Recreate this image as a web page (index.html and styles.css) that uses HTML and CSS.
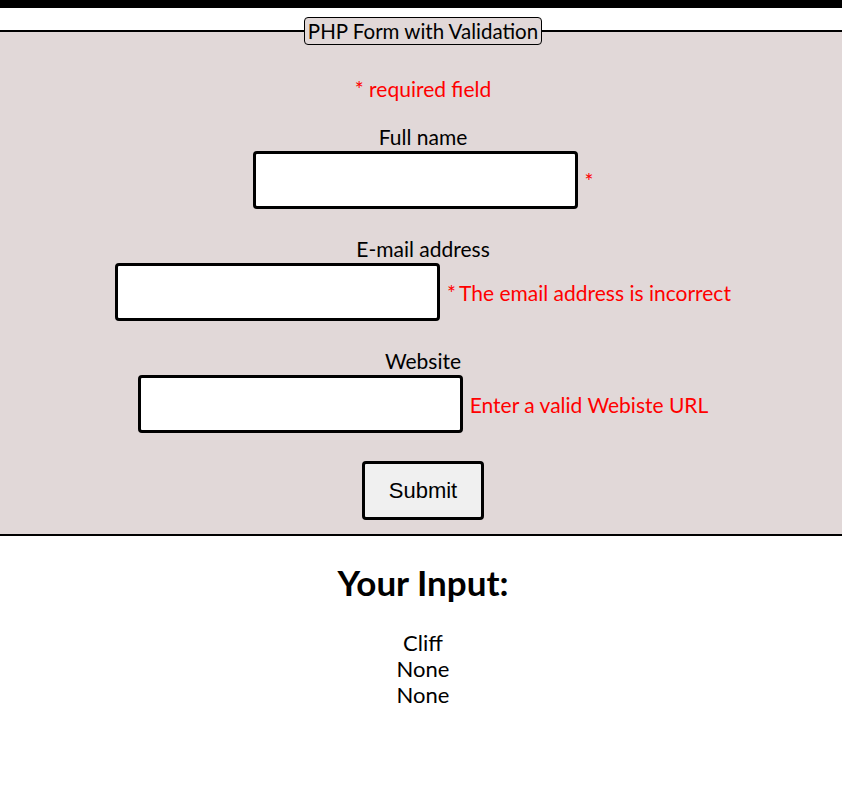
FILE: index.html
```html
<!DOCTYPE html>
<html>
<head>
<meta charset="utf-8">
<link rel="stylesheet" href="styles.css">
</head>
<body>
<div class="topbar"></div>
<form class="form">
  <fieldset class="box">
    <legend class="legend">PHP Form with Validation</legend>
    <p class="required">* required field</p>
    <div class="field">
      <label class="label">Full name</label>
      <div class="line"><input class="input" type="text"> <span class="err">*</span></div>
    </div>
    <div class="field">
      <label class="label">E-mail address</label>
      <div class="line"><input class="input" type="text"> <span class="err"><span class="star">*</span>The email address is incorrect</span></div>
    </div>
    <div class="field">
      <label class="label">Website</label>
      <div class="line"><input class="input" type="text"> <span class="err">Enter a valid Webiste URL</span></div>
    </div>
    <div class="actions"><button class="submit" type="button">Submit</button></div>
  </fieldset>
</form>
<section class="output">
  <h2 class="out-title">Your Input:</h2>
  <div class="out-lines">
    <div>Cliff</div>
    <div>None</div>
    <div>None</div>
  </div>
</section>
</body>
</html>
```
FILE: styles.css
```css
html, body {
  margin: 0;
  padding: 0;
  background: #ffffff;
}
body {
  font-family: "Lato", "Open Sans", sans-serif;
  font-size: 21px;
  color: #000;
}
.topbar {
  height: 8px;
  background: #000;
}
.form {
  margin: 0;
  padding-top: 9px;
}
.box {
  margin: 0;
  padding: 0 0 14px 4px;
  border: none;
  border-top: 2px solid #000;
  border-bottom: 2px solid #000;
  background: #e1d8d8;
  text-align: center;
  min-width: 0;
}
.legend {
  margin: 0 auto;
  padding: 0 3px;
  border: 1px solid #000;
  border-radius: 4px;
  background: #e1d8d8;
  font-size: 20.5px;
  line-height: 26px;
}
.required {
  color: #ff0000;
  margin: 32px 0 24px 0;
  line-height: 24px;
}
.field {
  margin-bottom: 28px;
}
.label {
  display: block;
  line-height: 24px;
  margin-bottom: 2px;
}
.line {
  display: flex;
  justify-content: center;
  align-items: center;
  gap: 7px;
}
.input {
  width: 325px;
  height: 58px;
  box-sizing: border-box;
  border: 3px solid #000;
  border-radius: 4px;
  background: #fff;
  margin: 0;
}
.err {
  color: #ff0000;
}
.star {
  margin-right: 3px;
}
.actions {
  display: flex;
  justify-content: center;
  margin-top: 2px;
}
.submit {
  width: 122px;
  height: 59px;
  box-sizing: border-box;
  border: 3px solid #000;
  border-radius: 4px;
  background: #f0f0f0;
  font-family: "Liberation Sans", Arial, sans-serif;
  font-size: 22px;
  color: #000;
}
.output {
  text-align: center;
  padding-left: 4px;
}
.out-title {
  font-size: 35px;
  font-weight: 700;
  margin: 27px 0 29px 0;
  line-height: 38px;
}
.out-lines {
  line-height: 26px;
  font-size: 22px;
}
```
